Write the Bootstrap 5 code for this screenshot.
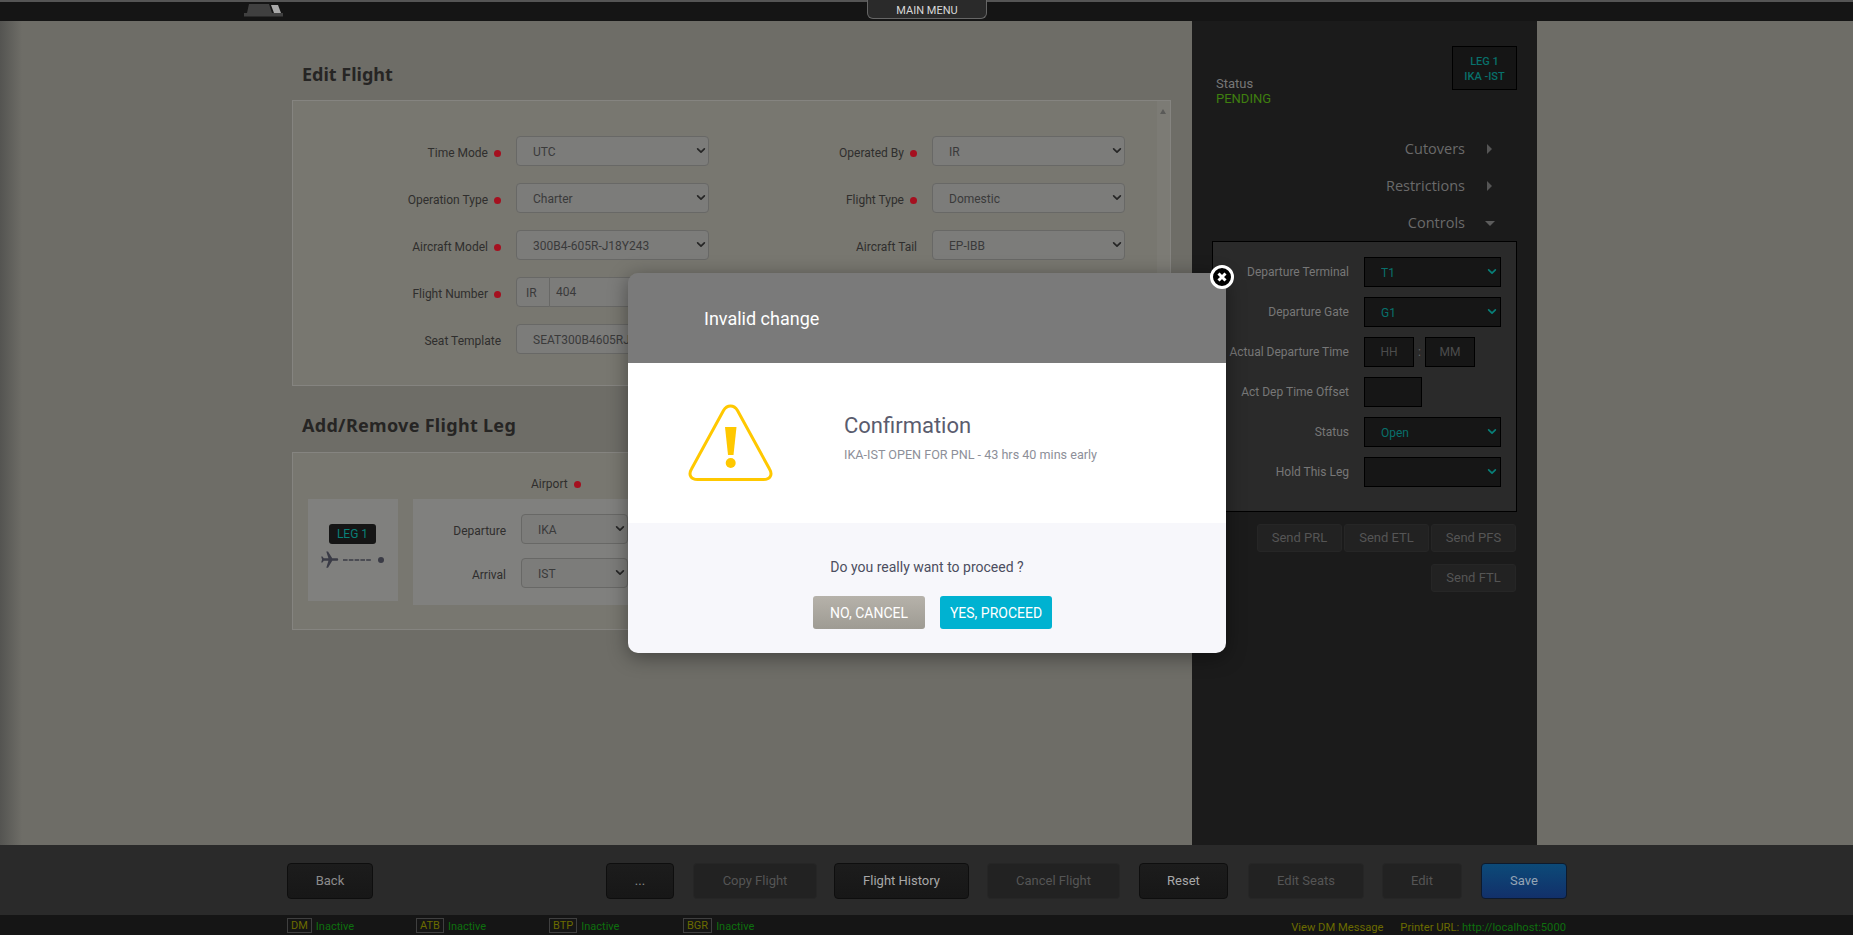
<!DOCTYPE html>
<html lang="en">
<head>
    <meta charset="UTF-8">
    <meta name="viewport" content="width=device-width, initial-scale=1.0">
    <title>Edit Flight</title>
    <link rel="stylesheet" href="https://cdn.jsdelivr.net/npm/bootstrap@5.3.0/dist/css/bootstrap.min.css">
    <style>
        html, body { height: 100%; }
        body {
            background-color: #6e6d67;
            font-family: Roboto, "Liberation Sans", sans-serif;
            font-size: 12px;
            color: #2f2e2d;
            overflow: hidden;
        }
        .app-shell { height: 935px; position: relative; }

        /* top bar */
        .top-strip {
            height: 21px;
            background-color: #151515;
            border-top: 2px solid #555;
            position: relative;
        }
        .top-logo { margin-left: 244px; margin-top: 2px; display: block; }
        .menu-tab {
            position: absolute;
            left: 867px;
            top: -2px;
            width: 120px;
            height: 19px;
            background-color: #2a2a2a;
            border: 1px solid #666;
            border-top: 0;
            border-radius: 0 0 6px 6px;
            color: #d8d8d8;
            font-size: 11px;
            line-height: 22px;
            text-align: center;
        }

        /* main area */
        .main-area { height: 824px; }
        .edit-col {
            width: 1192px;
            padding-left: 292px;
            padding-right: 21px;
            background: linear-gradient(to right, #545451 0, #6e6d67 22px);
        }
        .sect-title {
            font-family: "Noto Sans", "Liberation Sans", sans-serif;
            font-weight: 700;
            font-size: 18px;
            line-height: 24px;
            color: #262524;
            margin: 0 0 0 10px;
        }
        .title-first { padding-top: 41px; margin-bottom: 14px; }
        .title-next { padding-top: 27px; margin-bottom: 15px; letter-spacing: .3px; }
        .sheet {
            background-color: #787770;
            border: 1px solid #858480;
            position: relative;
        }
        .sheet-top { height: 286px; padding-top: 35px; }
        .sheet-legs { height: 178px; }
        .fake-scroll {
            position: absolute;
            right: 0;
            top: 0;
            bottom: 0;
            width: 13px;
            background-color: #7c7b75;
        }
        .fake-scroll::before {
            content: "";
            position: absolute;
            left: 3px;
            top: 8px;
            border-left: 3px solid transparent;
            border-right: 3px solid transparent;
            border-bottom: 5px solid #5a5a58;
        }
        .field-grid {
            display: grid;
            grid-template-columns: 416px 416px;
            row-gap: 17px;
        }
        .field-row {
            display: grid;
            grid-template-columns: 208px 1fr;
            column-gap: 15px;
            align-items: center;
        }
        .field-label { text-align: right; white-space: nowrap; padding-top: 3px; }
        .req-dot {
            display: inline-block;
            width: 7px;
            height: 7px;
            border-radius: 50%;
            background-color: #a5101f;
            margin-left: 6px;
        }
        .form-select.lt-select, .form-control.lt-input {
            height: 30px;
            min-height: 30px;
            padding: 2px 24px 0 16px;
            font-size: 12px;
            line-height: 26px;
            color: #3a3a3a;
            background-color: #7c7c7a;
            border: 1px solid #686866;
            border-radius: 4px;
            box-shadow: none;
        }
        .form-select.lt-select {
            background-image: url("data:image/svg+xml,%3csvg xmlns='http://www.w3.org/2000/svg' viewBox='0 0 16 16'%3e%3cpath fill='none' stroke='%23262626' stroke-linecap='round' stroke-linejoin='round' stroke-width='3' d='m2 5 6 6 6-6'/%3e%3c/svg%3e");
            background-position: right 2px top 9px;
            background-size: 10px 9px;
        }
        .flight-pair { display: flex; }
        .flight-pair .input-group-text {
            flex-shrink: 0;
            height: 30px;
            width: 34px;
            padding: 2px 0 0 9px;
            font-size: 12px;
            color: #3a3a3a;
            background-color: #7c7c7a;
            border: 1px solid #686866;
            border-radius: 4px 0 0 4px;
        }
        .flight-pair .form-control.lt-input {
            padding-left: 6px;
            padding-top: 0;
            border-left: 0;
            border-radius: 0 4px 4px 0;
        }

        /* legs */
        .legs-air { height: 46px; padding: 23px 0 0 238px; line-height: 16px; }
        .legs-row { display: flex; padding-left: 15px; gap: 15px; align-items: flex-start; }
        .leg-tile {
            width: 90px;
            height: 102px;
            background-color: #80807e;
            padding-top: 25px;
        }
        .leg-chip {
            width: 47px;
            height: 20px;
            margin: 0 0 0 21px;
            background-color: #151515;
            color: #088078;
            border-radius: 3px;
            font-size: 12px;
            line-height: 20px;
            text-align: center;
        }
        .leg-route { display: block; margin: 6px 0 0 13px; }
        .airport-box {
            flex-grow: 1;
            height: 106px;
            background-color: #80807e;
            padding-top: 15px;
            margin-right: 15px;
        }
        .airport-row {
            display: grid;
            grid-template-columns: 93px 107px;
            column-gap: 15px;
            align-items: center;
            margin-bottom: 14px;
        }

        /* right panel */
        .side-col {
            width: 345px;
            background-color: #1b1b1b;
            padding: 25px 20px 0 24px;
            color: #6e6e6e;
        }
        .side-head { height: 84px; }
        .side-status { padding-top: 30px; line-height: 15px; color: #777; font-size: 13px; }
        .side-pending { color: #3f7f0f; }
        .leg-flag {
            width: 65px;
            height: 44px;
            background-color: #151515;
            border: 1px solid #000;
            color: #08706b;
            font-size: 11px;
            line-height: 15px;
            font-weight: 500;
            text-align: center;
            padding-top: 7px;
        }
        .side-link {
            height: 37px;
            display: flex;
            align-items: center;
            justify-content: flex-end;
            font-family: "Open Sans", "Liberation Sans", sans-serif;
            font-size: 14.500px;
            color: #6a6a6a;
        }
        .side-arrow { width: 52px; position: relative; height: 10px; }
        .arrow-right {
            position: absolute;
            left: 22px;
            top: 0;
            border-top: 5px solid transparent;
            border-bottom: 5px solid transparent;
            border-left: 5px solid #555;
        }
        .arrow-down {
            position: absolute;
            left: 20px;
            top: 3px;
            border-left: 5px solid transparent;
            border-right: 5px solid transparent;
            border-top: 5px solid #5c5c5c;
        }
        .ctl-box {
            margin-left: -4px;
            height: 271px;
            background-color: #2a2a2a;
            border: 1px solid #000;
            padding: 15px 0 0 0;
        }
        .ctl-row {
            display: grid;
            grid-template-columns: 136px 137px;
            column-gap: 15px;
            align-items: center;
            height: 30px;
            margin-bottom: 10px;
            color: #777;
        }
        .ctl-row .field-label { padding-top: 0; }
        .form-select.dk-select, .form-control.dk-input {
            height: 30px;
            min-height: 30px;
            font-size: 12px;
            color: #08706b;
            background-color: #161616;
            border: 1px solid #000;
            border-radius: 0;
            padding: 2px 20px 0 16px;
            box-shadow: none;
        }
        .form-select.dk-select {
            background-image: url("data:image/svg+xml,%3csvg xmlns='http://www.w3.org/2000/svg' viewBox='0 0 16 16'%3e%3cpath fill='none' stroke='%23087f78' stroke-linecap='round' stroke-linejoin='round' stroke-width='3' d='m2 5 6 6 6-6'/%3e%3c/svg%3e");
            background-position: right 3px top 9px;
            background-size: 10px 9px;
        }
        .form-control.dk-input { padding: 0; text-align: center; }
        .form-control.dk-input::placeholder { color: #4c4c4c; opacity: 1; }
        .time-pair { display: flex; align-items: center; }
        .time-hh { width: 50px !important; }
        .time-sep { width: 11px; text-align: center; color: #666; }
        .offset-box { width: 58px !important; }
        .send-row { display: flex; justify-content: flex-end; gap: 2px; margin-top: 12px; margin-right: 1px; }
        .btn.send-btn {
            width: 85px;
            height: 28px;
            padding: 0;
            font-size: 13px;
            line-height: 26px;
            color: #555;
            background-color: #222;
            border: 1px solid #262626;
            border-radius: 3px;
        }

        /* bottom */
        .foot-bar {
            height: 70px;
            background-color: #2a2a2a;
            padding: 18px 286px 0 287px;
        }
        .btn.foot-btn {
            height: 36px;
            padding: 0;
            font-size: 13px;
            line-height: 34px;
            background: linear-gradient(#1c1c1c, #171717);
            border: 1px solid #0e0e0e;
            border-radius: 4px;
            color: #8c8c8c;
        }
        .btn.foot-off { background: #222; border-color: #262626; color: #555; }
        .btn.foot-on { color: #a8a8a8; }
        .btn.foot-save {
            background: linear-gradient(#0c4a78, #12306a);
            border-color: #0e1a2c;
            color: #95a5b5;
        }
        .fb-back { width: 86px; }
        .fb-more { width: 68px; }
        .fb-copy { width: 124px; margin-left: 19px; }
        .fb-hist { width: 135px; margin-left: 17px; }
        .fb-cancel { width: 133px; margin-left: 18px; }
        .fb-reset { width: 89px; margin-left: 19px; }
        .fb-seats { width: 116px; margin-left: 20px; }
        .fb-edit { width: 80px; margin-left: 18px; }
        .fb-save { width: 86px; margin-left: 19px; }
        .status-strip {
            height: 20px;
            background-color: #151515;
            padding: 0 287px 0 287px;
            font-size: 11px;
            line-height: 21px;
        }
        .st-item { display: flex; align-items: center; gap: 4px; color: #0e6f0e; }
        .st-item-text { padding-top: 2px; }
        .st-right { font-size: 11.200px; }
        .st-dm { width: 129px; }
        .st-atb { width: 133px; }
        .st-btp { width: 134px; }
        .st-tag {
            height: 15px;
            line-height: 13px;
            padding: 0 3px;
            border: 1px solid #3f3f3f;
            color: #6b6b00;
        }
        .st-olive { color: #6b6b00; }
        .st-green { color: #0e6f0e; }
        .st-print { margin-left: 14px; }

        /* dialog */
        .dlg-box {
            position: absolute;
            left: 628px;
            top: 273px;
            width: 598px;
            height: 380px;
            border: 0;
            border-radius: 10px;
            box-shadow: 0 4px 20px rgba(0, 0, 0, .4);
            z-index: 10;
        }
        .dlg-head {
            height: 90px;
            background-color: #7a7a7a;
            color: #fff;
            font-size: 18px;
            padding-left: 76px;
            border-radius: 10px 10px 0 0;
            display: flex;
            align-items: center;
        }
        .dlg-body {
            height: 160px;
            background-color: #fff;
            padding: 41px 0 0 60px;
            display: flex;
        }
        .dlg-text { margin-left: 71px; }
        .dlg-text h4 {
            font-family: Roboto, "Liberation Sans", sans-serif;
            font-size: 22px;
            font-weight: 400;
            line-height: 26px;
            color: #5a5c6e;
            margin: 9px 0 8px;
        }
        .dlg-text p { font-size: 12.600px; line-height: 16px; color: #8d8f99; margin: 0; }
        .dlg-foot {
            height: 130px;
            background-color: #f7f7fb;
            border-radius: 0 0 10px 10px;
            padding-top: 34px;
            text-align: center;
            color: #4c4e60;
            font-size: 14px;
            line-height: 20px;
        }
        .dlg-btns { display: flex; justify-content: center; gap: 15px; margin-top: 19px; margin-left: 11px; }
        .btn.dlg-btn {
            width: 112px;
            height: 33px;
            padding: 0;
            font-size: 14px;
            line-height: 35px;
            border: 0;
            border-radius: 3px;
            color: #fff;
        }
        .dlg-no { background: linear-gradient(#b6b2aa, #9e9b93); }
        .dlg-yes { background-color: #00b2d1; }
        .dlg-close {
            position: absolute;
            right: -8px;
            top: -8px;
            width: 24px;
            height: 24px;
            padding: 0;
            border: 3px solid #fff;
            border-radius: 50%;
            background-color: #000;
            display: flex;
            align-items: center;
            justify-content: center;
        }
    </style>
</head>
<body>
    <div class="app-shell">
        <div class="top-strip">
            <svg class="top-logo" width="39" height="13" viewBox="0 0 39 13">
                <path fill="#404040" d="M5 0H25L28 9H39V12.500H0V9H3z"/>
                <path fill="#a8a8a8" d="M27 1H34L37 9H30z"/>
            </svg>
            <div class="menu-tab">MAIN MENU</div>
        </div>

        <div class="main-area d-flex">
            <div class="edit-col">
                <h5 class="sect-title title-first">Edit Flight</h5>
                <div class="sheet sheet-top">
                    <div class="fake-scroll"></div>
                    <div class="field-grid">
                        <div class="field-row">
                            <label class="field-label">Time Mode<span class="req-dot"></span></label>
                            <select class="form-select lt-select"><option>UTC</option></select>
                        </div>
                        <div class="field-row">
                            <label class="field-label">Operated By<span class="req-dot"></span></label>
                            <select class="form-select lt-select"><option>IR</option></select>
                        </div>
                        <div class="field-row">
                            <label class="field-label">Operation Type<span class="req-dot"></span></label>
                            <select class="form-select lt-select"><option>Charter</option></select>
                        </div>
                        <div class="field-row">
                            <label class="field-label">Flight Type<span class="req-dot"></span></label>
                            <select class="form-select lt-select"><option>Domestic</option></select>
                        </div>
                        <div class="field-row">
                            <label class="field-label">Aircraft Model<span class="req-dot"></span></label>
                            <select class="form-select lt-select"><option>300B4-605R-J18Y243</option></select>
                        </div>
                        <div class="field-row">
                            <label class="field-label">Aircraft Tail</label>
                            <select class="form-select lt-select"><option>EP-IBB</option></select>
                        </div>
                        <div class="field-row">
                            <label class="field-label">Flight Number<span class="req-dot"></span></label>
                            <div class="flight-pair">
                                <span class="input-group-text">IR</span>
                                <input class="form-control lt-input" value="404">
                            </div>
                        </div>
                        <div></div>
                        <div class="field-row">
                            <label class="field-label">Seat Template</label>
                            <select class="form-select lt-select"><option>SEAT300B4605RJ18Y243</option></select>
                        </div>
                    </div>
                </div>

                <h5 class="sect-title title-next">Add/Remove Flight Leg</h5>
                <div class="sheet sheet-legs">
                    <div class="legs-air">Airport<span class="req-dot"></span></div>
                    <div class="legs-row">
                        <div class="leg-tile">
                            <div class="leg-chip">LEG 1</div>
                            <svg class="leg-route" width="64" height="20" viewBox="0 0 64 20">
                                <path fill="#3a3b46" transform="translate(-1.500 -0.200) scale(.85) rotate(90 12 12)" d="M21 16v-2l-8-5V3.500c0-.83-.67-1.500-1.500-1.500S10 2.670 10 3.500V9l-8 5v2l8-2.500V19l-2 1.500V22l3.500-1 3.500 1v-1.500L13 19v-5.500l8 2.500z"/>
                                <path stroke="#3a3b46" stroke-width="1.500" stroke-dasharray="4.600 1.200" d="M22 10H50"/>
                                <circle cx="60" cy="10" r="3" fill="#3a3b46"/>
                            </svg>
                        </div>
                        <div class="airport-box">
                            <div class="airport-row">
                                <label class="field-label">Departure</label>
                                <select class="form-select lt-select"><option>IKA</option></select>
                            </div>
                            <div class="airport-row">
                                <label class="field-label">Arrival</label>
                                <select class="form-select lt-select"><option>IST</option></select>
                            </div>
                        </div>
                    </div>
                </div>
            </div>

            <div class="side-col">
                <div class="side-head d-flex justify-content-between">
                    <div class="side-status">Status<br><span class="side-pending">PENDING</span></div>
                    <div class="leg-flag">LEG 1<br>IKA -IST</div>
                </div>
                <div class="side-link">Cutovers<span class="side-arrow"><span class="arrow-right"></span></span></div>
                <div class="side-link">Restrictions<span class="side-arrow"><span class="arrow-right"></span></span></div>
                <div class="side-link">Controls<span class="side-arrow"><span class="arrow-down"></span></span></div>
                <div class="ctl-box">
                    <div class="ctl-row">
                        <label class="field-label">Departure Terminal</label>
                        <select class="form-select dk-select"><option>T1</option></select>
                    </div>
                    <div class="ctl-row">
                        <label class="field-label">Departure Gate</label>
                        <select class="form-select dk-select"><option>G1</option></select>
                    </div>
                    <div class="ctl-row">
                        <label class="field-label">Actual Departure Time</label>
                        <div class="time-pair">
                            <input class="form-control dk-input time-hh" placeholder="HH">
                            <span class="time-sep">:</span>
                            <input class="form-control dk-input time-hh" placeholder="MM">
                        </div>
                    </div>
                    <div class="ctl-row">
                        <label class="field-label">Act Dep Time Offset</label>
                        <input class="form-control dk-input offset-box">
                    </div>
                    <div class="ctl-row">
                        <label class="field-label">Status</label>
                        <select class="form-select dk-select"><option>Open</option></select>
                    </div>
                    <div class="ctl-row">
                        <label class="field-label">Hold This Leg</label>
                        <select class="form-select dk-select"><option></option></select>
                    </div>
                </div>
                <div class="send-row">
                    <button class="btn send-btn">Send PRL</button>
                    <button class="btn send-btn">Send ETL</button>
                    <button class="btn send-btn">Send PFS</button>
                </div>
                <div class="send-row">
                    <button class="btn send-btn">Send FTL</button>
                </div>
            </div>
        </div>

        <div class="foot-bar d-flex justify-content-between">
            <button class="btn foot-btn fb-back">Back</button>
            <div class="d-flex">
                <button class="btn foot-btn fb-more">...</button>
                <button class="btn foot-btn foot-off fb-copy">Copy Flight</button>
                <button class="btn foot-btn foot-on fb-hist">Flight History</button>
                <button class="btn foot-btn foot-off fb-cancel">Cancel Flight</button>
                <button class="btn foot-btn foot-on fb-reset">Reset</button>
                <button class="btn foot-btn foot-off fb-seats">Edit Seats</button>
                <button class="btn foot-btn foot-off fb-edit">Edit</button>
                <button class="btn foot-btn foot-save fb-save">Save</button>
            </div>
        </div>

        <div class="status-strip d-flex justify-content-between">
            <div class="d-flex">
                <div class="st-item st-dm"><span class="st-tag">DM</span><span class="st-item-text">Inactive</span></div>
                <div class="st-item st-atb"><span class="st-tag">ATB</span><span class="st-item-text">Inactive</span></div>
                <div class="st-item st-btp"><span class="st-tag">BTP</span><span class="st-item-text">Inactive</span></div>
                <div class="st-item"><span class="st-tag">BGR</span><span class="st-item-text">Inactive</span></div>
            </div>
            <div class="st-item-text st-right">
                <span class="st-olive">View DM Message</span>
                <span class="st-olive st-print">Printer URL:</span>
                <span class="st-green">http://localhost:5000</span>
            </div>
        </div>

        <div class="modal-content dlg-box">
            <button class="dlg-close" aria-label="Close">
                <svg width="10" height="10" viewBox="0 0 10 10"><path stroke="#fff" stroke-width="3" d="M1.500 1.500l7 7M8.500 1.500l-7 7"/></svg>
            </button>
            <div class="dlg-head">Invalid change</div>
            <div class="dlg-body">
                <svg width="85" height="77" viewBox="0 0 85 77">
                    <path fill="none" stroke="#ffc800" stroke-width="3" d="M35.500 6.500C39 .5 46 .5 49.500 6.500L81.500 65C85 71 82 75.500 75.500 75.500H9.500C3 75.500 0 71 3.500 65z"/>
                    <path fill="#ffc800" d="M37 23H48.500L45.500 51H40z"/>
                    <circle cx="42.700" cy="59" r="5" fill="#ffc800"/>
                </svg>
                <div class="dlg-text">
                    <h4>Confirmation</h4>
                    <p>IKA-IST OPEN FOR PNL - 43 hrs 40 mins early</p>
                </div>
            </div>
            <div class="dlg-foot">
                Do you really want to proceed ?
                <div class="dlg-btns">
                    <button class="btn dlg-btn dlg-no">NO, CANCEL</button>
                    <button class="btn dlg-btn dlg-yes">YES, PROCEED</button>
                </div>
            </div>
        </div>
    </div>
    <script src="https://cdn.jsdelivr.net/npm/bootstrap@5.3.0/dist/js/bootstrap.bundle.min.js"></script>
</body>
</html>
